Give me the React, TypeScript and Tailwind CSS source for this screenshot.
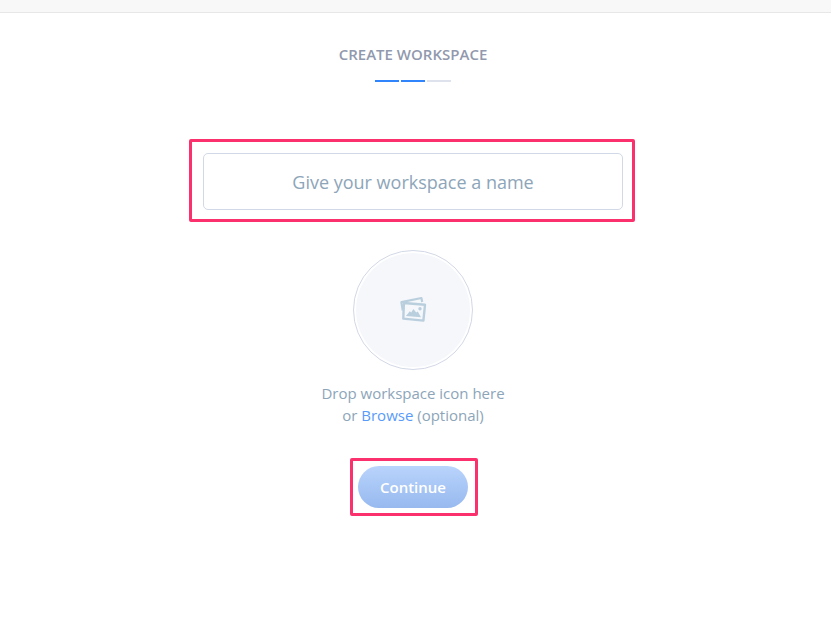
import React from "react";

function PhotosIcon() {
  return (
    <svg className="h-[28px] w-[28px]" viewBox="0 0 28 28" fill="none">
      <path
        d="M3.8 14.5L2.4 6.2L22.4 2L23.2 6"
        stroke="#bacfdd"
        strokeWidth="2.2"
        strokeLinejoin="round"
      />
      <path
        d="M4.9 7L26 8.8L24.4 24.6L4.3 22.6Z"
        fill="#f5f7fb"
        stroke="#bacfdd"
        strokeWidth="2.4"
        strokeLinejoin="round"
      />
      <path d="M6.9 20.1L10.8 15.2L12.2 16.5L14.4 13.1L17.2 16.4L18.8 15.5L22 21.2Z" fill="#bacfdd" />
      <circle cx="21" cy="12.7" r="1.7" fill="#bacfdd" />
    </svg>
  );
}

export default function App() {
  return (
    <div className="flex h-[623px] w-[831px] flex-col overflow-hidden bg-white font-['Open_Sans','Noto_Sans',sans-serif]">
      <header className="h-[13px] shrink-0 border-b border-[#e6e7e8] bg-[#f8f8f8]" />
      <main className="flex w-[826px] flex-col items-center">
        <h1 className="mt-[31px] text-[15px] leading-5 font-semibold whitespace-nowrap text-[#9199ae]">
          CREATE WORKSPACE
        </h1>
        <div className="mt-4 flex gap-[2px]">
          <span className="h-[2px] w-6 bg-[#3185fc]" />
          <span className="h-[2px] w-6 bg-[#3185fc]" />
          <span className="h-[2px] w-6 bg-[#dde2ed]" />
        </div>
        <div className="mt-[57px] mr-[2px] h-[83px] w-[446px] rounded-[2px] border-3 border-[#fb316d] pt-[11px] pr-[9px] pl-[11px]">
          <input
            className="h-[57px] w-full rounded-[5px] border border-[#d2d9e6] bg-white text-center text-[18px] text-[#8da5b9] outline-none placeholder:text-[#8da5b9] placeholder:opacity-100"
            placeholder="Give your workspace a name"
          />
        </div>
        <div className="mt-[28px] flex size-[120px] items-center justify-center rounded-full border border-[#d3d8e7] p-[2px]">
          <div className="flex size-full items-center justify-center rounded-full bg-[#f5f7fb]">
            <PhotosIcon />
          </div>
        </div>
        <p className="mt-[12px] text-center text-[15px] leading-[22px] text-[#8da5b9]">
          Drop workspace icon here
          <br />
          or <a className="text-[#589bfa]">Browse</a> (optional)
        </p>
        <div className="mt-[32px] ml-[2px] h-[58px] w-[128px] rounded-[2px] border-3 border-[#fb316d] pt-[5px] pl-[5px]">
          <button className="h-[42px] w-[110px] rounded-full bg-linear-to-b from-[#b9d4fc] to-[#97b9ef] text-[15px] font-semibold text-white">
            Continue
          </button>
        </div>
      </main>
    </div>
  );
}
